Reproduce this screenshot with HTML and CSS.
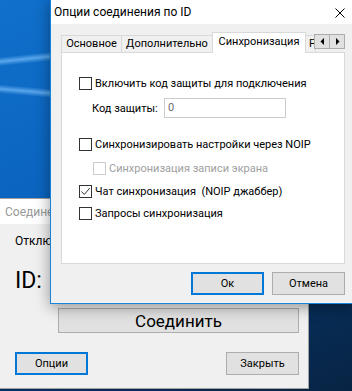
FILE: index.html
```html
<!DOCTYPE html>
<html lang="ru">
<head>
    <meta charset="UTF-8">
    <meta name="viewport" content="width=device-width, initial-scale=1.0">
    <title>Опции соединения по ID</title>
    <link rel="stylesheet" href="styles.css">
</head>
<body>
    <div class="beam beam-one"></div>
    <div class="beam beam-two"></div>

    <div class="window back-window">
        <div class="back-title">Соединение</div>
        <div class="back-body">
            <div class="status">Отключено</div>
            <div class="id-label">ID:</div>
            <button class="btn connect-btn">Соединить</button>
            <div class="back-buttons">
                <button class="btn btn-default">Опции</button>
                <button class="btn">Закрыть</button>
            </div>
        </div>
    </div>

    <div class="window dialog">
        <div class="title-bar">
            <span>Опции соединения по ID</span>
            <svg class="close-icon" width="10" height="10" viewBox="0 0 10 10">
                <path d="M0.5 0.5 L9.5 9.5 M9.5 0.5 L0.5 9.5" stroke="#000" stroke-width="1" fill="none"/>
            </svg>
        </div>

        <div class="dialog-body">
            <div class="tabs">
                <div class="tab tab-main">Основное</div>
                <div class="tab tab-extra">Дополнительно</div>
                <div class="tab tab-active">Синхронизация</div>
                <div class="tab tab-cut">Р</div>
                <div class="spin">
                    <span class="spin-btn"><svg width="5" height="7" viewBox="0 0 5 7"><path d="M4 0 L4 7 L0.5 3.5 Z" fill="#000"/></svg></span>
                    <span class="spin-btn"><svg width="5" height="7" viewBox="0 0 5 7"><path d="M1 0 L1 7 L4.5 3.5 Z" fill="#000"/></svg></span>
                </div>
            </div>

            <div class="panel">
                <label class="check-row row-protect">
                    <span class="box"></span>
                    <span>Включить код защиты для подключения</span>
                </label>

                <div class="code-row">
                    <span class="code-label">Код защиты:</span>
                    <div class="code-input">0</div>
                </div>

                <label class="check-row row-settings">
                    <span class="box"></span>
                    <span>Синхронизировать настройки через NOIP</span>
                </label>

                <label class="check-row row-screen disabled">
                    <span class="box"></span>
                    <span>Синхронизация записи экрана</span>
                </label>

                <label class="check-row row-chat">
                    <span class="box">
                        <svg width="11" height="11" viewBox="0 0 11 11"><path d="M1.5 5.5 L4.3 8.5 L9.8 2" stroke="#333" stroke-width="1" fill="none"/></svg>
                    </span>
                    <span>Чат синхронизация&nbsp; (NOIP джаббер)</span>
                </label>

                <label class="check-row row-requests">
                    <span class="box"></span>
                    <span>Запросы синхронизация</span>
                </label>
            </div>

            <div class="dialog-buttons">
                <button class="btn btn-default">Ок</button>
                <button class="btn">Отмена</button>
            </div>
        </div>
    </div>
</body>
</html>
```

FILE: styles.css
```css
body {
    margin: 0;
    width: 352px;
    height: 391px;
    overflow: hidden;
    position: relative;
    font-family: Roboto, "Liberation Sans", sans-serif;
    font-size: 11px;
    color: #000;
    background: linear-gradient(158deg, #1070cb 0%, #0b64bf 40%, #084a8f 58%, #06315f 72%, #082444 100%);
}

.beam {
    position: absolute;
    left: -10px;
    width: 80px;
    height: 9px;
    background: linear-gradient(to bottom, rgba(90, 170, 240, 0), rgba(120, 190, 250, 0.7), rgba(90, 170, 240, 0));
}

.beam-one {
    top: 54px;
    transform: rotate(-6deg);
}

.beam-two {
    top: 87px;
    transform: rotate(5deg);
}

.window {
    position: absolute;
    box-sizing: border-box;
    background: #f0f0f0;
}

/* back window */

.back-window {
    left: -1px;
    top: 198px;
    width: 310px;
    height: 191px;
    border: 1px solid #a0a0a0;
    display: flex;
    flex-direction: column;
}

.back-title {
    height: 25px;
    background: #fff;
    color: #999;
    font-size: 12px;
    padding-left: 5px;
    display: flex;
    align-items: center;
}

.back-body {
    flex: 1;
    padding: 9px 9px 0 15px;
    display: flex;
    flex-direction: column;
}

.status {
    line-height: 16px;
    font-size: 12px;
}

.id-label {
    margin-top: 18px;
    font-size: 23px;
    line-height: 28px;
}

.btn {
    box-sizing: border-box;
    width: 73px;
    height: 23px;
    padding: 0;
    background: #e1e1e1;
    border: 1px solid #adadad;
    font-family: Roboto, "Liberation Sans", sans-serif;
    font-size: 11px;
    color: #000;
}

.btn-default {
    border: 2px solid #0078d7;
}

.connect-btn {
    margin: 13px 0 0 43px;
    width: 241px;
    height: 25px;
    font-size: 17px;
    line-height: 20px;
}

.back-buttons {
    margin-top: 19px;
    width: 284px;
    display: flex;
    justify-content: space-between;
}

/* front dialog */

.dialog {
    left: 50px;
    top: -1px;
    width: 306px;
    height: 305px;
    border: 1px solid #1883d7;
    box-shadow: 0 3px 14px rgba(0, 0, 0, 0.4);
}

.title-bar {
    height: 24px;
    background: #fff;
    font-size: 12px;
    padding: 0 10px 0 3px;
    display: flex;
    align-items: center;
    justify-content: space-between;
}

.close-icon {
    margin-top: 1px;
}

.dialog-body {
    padding: 8px 10px 0 10px;
}

.tabs {
    height: 20px;
    display: flex;
    align-items: flex-end;
    position: relative;
    z-index: 1;
}

.tab {
    box-sizing: border-box;
    flex-shrink: 0;
    height: 17px;
    border: 1px solid #d9d9d9;
    border-bottom: none;
    background: #f0f0f0;
    text-align: center;
    line-height: 16px;
    white-space: nowrap;
    overflow: hidden;
}

.tab-main {
    width: 61px;
}

.tab-extra {
    width: 92px;
    margin-left: -1px;
}

.tab-active {
    width: 94px;
    height: 21px;
    margin-left: -1px;
    margin-bottom: -1px;
    background: #fff;
    line-height: 18px;
}

.tab-cut {
    width: 11px;
    margin-left: -1px;
    text-align: left;
    padding-left: 3px;
}

.spin {
    flex-shrink: 0;
    align-self: flex-start;
    margin: 2px 0 0 -2px;
    display: flex;
    background: #f0f0f0;
}

.spin-btn {
    box-sizing: border-box;
    width: 16px;
    height: 15px;
    border: 1px solid #adadad;
    background: #e1e1e1;
    display: flex;
    align-items: center;
    justify-content: center;
}

.spin-btn + .spin-btn {
    margin-left: -1px;
}

.panel {
    box-sizing: border-box;
    height: 212px;
    background: #fff;
    border: 1px solid #d9d9d9;
    padding: 24px 0 0 17px;
    display: flex;
    flex-direction: column;
    align-items: flex-start;
}

.check-row {
    height: 13px;
    display: flex;
    align-items: center;
    white-space: nowrap;
}

.box {
    box-sizing: border-box;
    flex-shrink: 0;
    width: 13px;
    height: 13px;
    margin-right: 3px;
    border: 1px solid #333;
    background: #fff;
    display: flex;
    align-items: center;
    justify-content: center;
}

.row-settings {
    margin-top: 20px;
}

.row-screen {
    margin: 11px 0 0 14px;
}

.row-chat {
    margin-top: 10px;
}

.row-requests {
    margin-top: 9px;
}

.disabled {
    color: #a0a0a0;
}

.disabled .box {
    border-color: #cccccc;
}

.code-row {
    margin: 8px 0 0 13px;
    display: flex;
    align-items: center;
    white-space: nowrap;
}

.code-label {
    flex-shrink: 0;
    width: 72px;
}

.code-input {
    box-sizing: border-box;
    width: 122px;
    height: 20px;
    border: 1px solid #cccccc;
    background: #fff;
    color: #6d6d6d;
    padding-left: 3px;
    line-height: 18px;
}

.dialog-buttons {
    margin-top: 8px;
    display: flex;
    justify-content: flex-end;
    gap: 8px;
}
```
